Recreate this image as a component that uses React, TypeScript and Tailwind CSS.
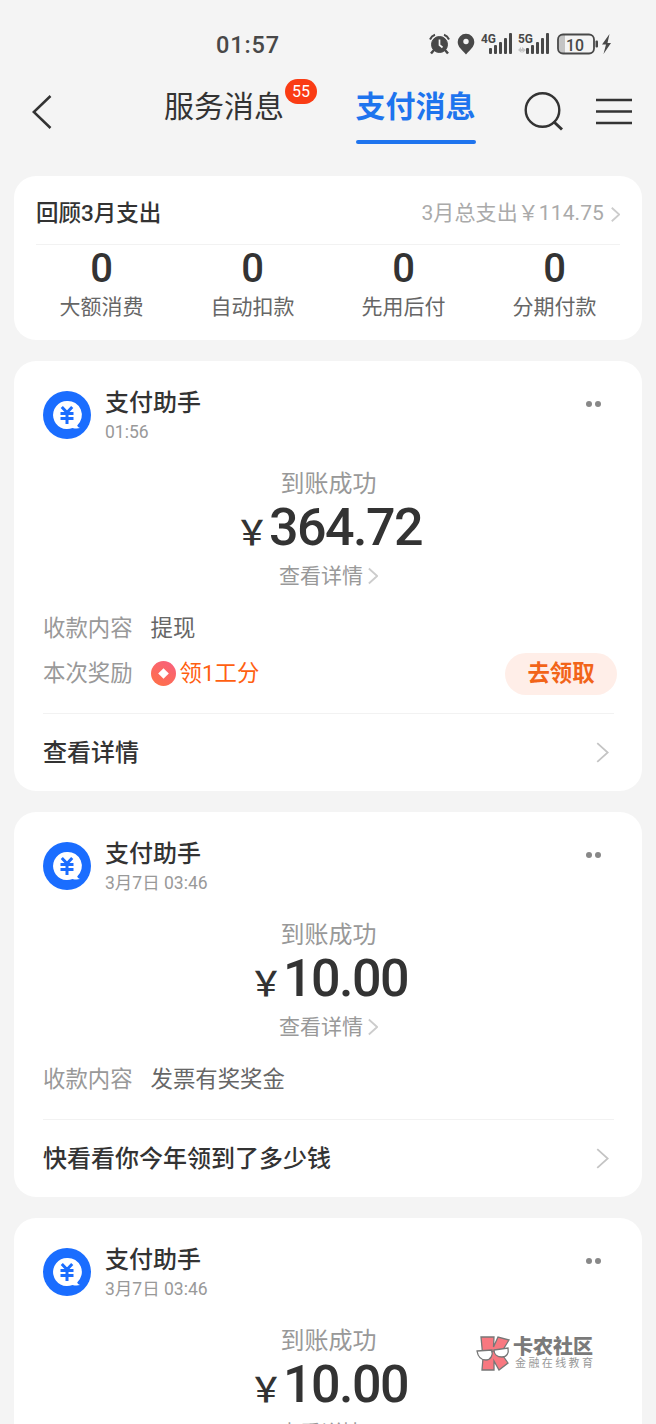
import type { ReactNode } from "react";

type Message = {
  time: string;
  amount: string;
  content: string;
  reward?: string;
  footer: string;
};

const stats = ["大额消费", "自动扣款", "先用后付", "分期付款"];

const messages: Message[] = [
  { time: "01:56", amount: "364.72", content: "提现", reward: "领1工分", footer: "查看详情" },
  { time: "3月7日 03:46", amount: "10.00", content: "发票有奖奖金", footer: "快看看你今年领到了多少钱" },
  { time: "3月7日 03:46", amount: "10.00", content: "发票有奖奖金", footer: "快看看你今年领到了多少钱" },
];

function Chevron({ className }: { className: string }) {
  return (
    <svg viewBox="0 0 12 20" fill="none" stroke="currentColor" className={className}>
      <path d="M1 1l10 9-10 9" strokeWidth="1.8" vectorEffect="non-scaling-stroke" />
    </svg>
  );
}

function Signal({ label, data }: { label: string; data?: boolean }) {
  return (
    <svg width="32" height="24" viewBox="0 0 32 24" fill="#484848">
      <text x="0" y="11" fontSize="12" fontWeight="700" textLength="15" lengthAdjust="spacingAndGlyphs">
        {label}
      </text>
      {data && <path d="M0 18l3-3v2h1v-2l4 3-3.500 3v-2h-1v2z" fill="#c4c4c4" />}
      <rect x="8" y="16" width="3" height="6" rx="1" />
      <rect x="13" y="13" width="3" height="9" rx="1" />
      <rect x="18" y="10" width="3" height="12" rx="1" />
      <rect x="23" y="6" width="3" height="16" rx="1" />
      <rect x="28" y="1" width="3" height="21" rx="1" />
    </svg>
  );
}

function StatusBar() {
  return (
    <div className="flex h-[76px] items-start pt-[31px] text-[#484848]">
      <span className="ml-[216px] w-[213px] text-[23.500px] leading-[28px] font-medium tracking-[0.9px]">01:57</span>
      <div className="flex items-center pt-[1px]">
        <svg width="21" height="22" viewBox="0 0 21 22" fill="none" stroke="#484848">
          <circle cx="10.500" cy="11.500" r="8" fill="#484848" />
          <path d="M1 6.500Q2.500 3 6 1.800M20 6.500Q18.500 3 15 1.800" strokeWidth="2" />
          <path d="M5 17l-3 3.500M16 17l3 3.500" strokeWidth="2.500" />
          <path d="M10.500 6.500v5.500l3 2.500" stroke="#f4f4f4" strokeWidth="1.700" />
        </svg>
        <svg width="18" height="22" viewBox="0 0 18 22" className="ml-[7px]">
          <path
            d="M9 .8a8.300 8.300 0 0 0-8.300 8.300C.7 14 5 17 9 21.500c4-4.500 8.300-7.500 8.300-12.400A8.300 8.300 0 0 0 9 .8z"
            fill="#484848"
          />
          <circle cx="9" cy="8.500" r="2.700" fill="#f4f4f4" />
        </svg>
        <div className="ml-[6px] flex gap-[5px]">
          <Signal label="4G" />
          <Signal label="5G" data />
        </div>
        <svg width="55" height="22" viewBox="0 0 55 22" className="ml-[7px]">
          <path d="M8 2v18H6a4 4 0 0 1-4-4V6a4 4 0 0 1 4-4z" fill="#c4c4c4" />
          <rect x="1" y="1.500" width="36" height="19" rx="5" fill="none" stroke="#484848" strokeWidth="1.800" />
          <text x="9" y="17.500" fontSize="17" fontWeight="500" fill="#484848" textLength="18" lengthAdjust="spacingAndGlyphs">
            10
          </text>
          <rect x="38.500" y="7.500" width="2.500" height="7" rx="1" fill="#484848" />
          <path d="M52.500 1L45 11.500h4L46.500 21 54 10h-3.500z" fill="#484848" />
        </svg>
      </div>
    </div>
  );
}

function NavBar() {
  return (
    <div className="flex h-[100px] items-start text-[#333]">
      <svg width="20" height="34" viewBox="0 0 20 34" fill="none" stroke="#333" strokeWidth="2.500" className="mt-[19px] ml-[32px]">
        <path d="M18.500 1L1.800 17l16.700 16" />
      </svg>
      <div className="relative ml-[112px] w-[121px] pt-[11px] text-[30px] leading-[40px]">
        服务消息
        <span className="absolute top-[3px] left-[121px] flex h-[25px] w-[32px] items-center justify-center rounded-full bg-[#fa3c14] text-[16px] text-white">
          55
        </span>
      </div>
      <div className="ml-[70px] flex w-[121px] flex-col items-center pt-[11px] text-[30px] leading-[40px] font-bold text-[#1e74ee]">
        支付消息
        <span className="mt-[13px] h-[4px] w-[120px] rounded-full bg-[#1e74ee]" />
      </div>
      <svg width="40" height="40" viewBox="0 0 40 40" fill="none" stroke="#333" strokeWidth="2.400" className="mt-[16px] ml-[48px]">
        <circle cx="18.500" cy="18" r="16.800" />
        <path d="M29.500 29.500l8.500 8" strokeWidth="3" />
      </svg>
      <svg width="36" height="28" viewBox="0 0 36 28" stroke="#333" strokeWidth="2.400" className="mt-[21px] ml-[32px]">
        <path d="M0 3h36M0 14.500h36M0 26h36" />
      </svg>
    </div>
  );
}

function Card({ children, className = "" }: { children: ReactNode; className?: string }) {
  return <section className={`mx-[14px] shrink-0 rounded-[22px] bg-white ${className}`}>{children}</section>;
}

function Summary() {
  return (
    <Card className="h-[164px] px-[22px]">
      <div className="flex h-[69px] items-center border-b border-[#f2f2f2] pt-[8px]">
        <h2 className="text-[22.500px] font-medium text-[#333]">回顾3月支出</h2>
        <span className="ml-auto text-[21px] tracking-[0.1px] text-[#aaa]">3月总支出￥114.75</span>
        <Chevron className="ml-[7px] h-[17px] w-[9px] text-[#ccc]" />
      </div>
      <div className="-mx-[10px] grid grid-cols-4">
        {stats.map((label) => (
          <div key={label} className="flex flex-col items-center">
            <span className="mt-[3px] text-[40px] leading-[42px] font-medium text-[#333]">0</span>
            <span className="mt-[2px] text-[21px] leading-[30px] text-[#666]">{label}</span>
          </div>
        ))}
      </div>
    </Card>
  );
}

function Avatar() {
  return (
    <svg width="48" height="48" viewBox="0 0 48 48" fill="none">
      <circle cx="24" cy="24" r="24" fill="#1a6dff" />
      <path d="M24 10a14 14 0 1 0 5.500 26.900c2.500.7 5 .8 7.500.1-1.500-.7-2.500-1.500-2.800-2.600A14 14 0 0 0 24 10z" fill="#fff" />
      <path d="M18.800 16l5.200 5.500 5.200-5.500M17.500 22.500h13M17.500 27.500h13M24 22v11" stroke="#1a6dff" strokeWidth="3" />
    </svg>
  );
}

function RewardIcon() {
  return (
    <svg width="25" height="25" viewBox="0 0 25 25">
      <defs>
        <linearGradient id="reward" x1="0.8" y1="0" x2="0.200" y2="1">
          <stop offset="0" stopColor="#f8607c" />
          <stop offset="1" stopColor="#ff7048" />
        </linearGradient>
      </defs>
      <circle cx="12.500" cy="12.500" r="12.500" fill="url(#reward)" />
      <path d="M12.500 7.200l5.300 5.300-5.300 5.300-5.300-5.300z" fill="#fff" />
    </svg>
  );
}

function MessageCard({ message }: { message: Message }) {
  return (
    <Card className="pr-[28px] pl-[29px]">
      <div className="flex pt-[26px]">
        <div className="mt-[4px]">
          <Avatar />
        </div>
        <div className="ml-[14px] flex-1">
          <h3 className="text-[24px] leading-[32px] font-medium text-[#333]">支付助手</h3>
          <p className="mt-[1px] text-[17.500px] leading-[24px] text-[#999]">{message.time}</p>
        </div>
        <div className="mt-[14px] mr-[13px] flex gap-[3px]">
          <span className="size-[6px] rounded-full bg-[#888]" />
          <span className="size-[6px] rounded-full bg-[#888]" />
        </div>
      </div>
      <div className="mt-[25px] flex flex-col items-center">
        <p className="text-[24px] leading-[30px] text-[#999]">到账成功</p>
        <p className="flex items-baseline text-[52px] leading-[58px] font-medium tracking-[-1.500px] text-[#333]">
          <span className="text-[34px] tracking-normal">￥</span>
          {message.amount}
        </p>
        <p className="mt-[-1px] flex items-center text-[21px] leading-[30px] text-[#999]">
          查看详情
          <Chevron className="ml-[5px] h-[18px] w-[10px] text-[#ccc]" />
        </p>
      </div>
      <div className="pt-[15px] text-[22.400px] text-[#999]">
        <div className="flex h-[45px] items-center gap-[18px]">
          <span>收款内容</span>
          <span className="text-[#666]">{message.content}</span>
        </div>
        {message.reward && (
          <div className="mb-[10px] flex h-[45px] items-center">
            <span>本次奖励</span>
            <span className="ml-[18px] flex items-center gap-[4px] text-[#ff6010]">
              <RewardIcon />
              {message.reward}
            </span>
            <button className="mr-[-3px] ml-auto h-[42px] w-[112px] rounded-full bg-[#ffeee8] text-[22.400px] font-bold text-[#f26419]">
              去领取
            </button>
          </div>
        )}
      </div>
      <div className="mt-[17px] flex h-[78px] items-center border-t border-[#f2f2f2]">
        <span className="text-[24px] font-medium text-[#333]">{message.footer}</span>
        <Chevron className="mr-[5px] ml-auto h-[21px] w-[13px] text-[#c4c4c4]" />
      </div>
    </Card>
  );
}

function Watermark() {
  return (
    <div className="absolute top-[1336px] left-[476px] flex">
      <svg width="34" height="36" viewBox="0 0 34 36" stroke="#777" strokeWidth="1.300">
        <path d="M5 1h13l-.5 10L22 1l11 3-8 13 7 10-9 7-5-9v9H6l1-12z" fill="#f87880" />
        <path d="M1 15l15-1c1 5-1 10-6 10S2 21 1 15zM18 14l14-2c1 5-1 9-6 9s-8-3-8-7z" fill="#fff" />
        <path d="M15 16l3-1" />
      </svg>
      <div className="ml-[3px]">
        <p className="text-[20px] leading-[22px] font-black text-[#7a7a7a]">卡农社区</p>
        <p className="ml-[2px] text-[11px] leading-[12px] tracking-[2.400px] text-[#999]">金融在线教育</p>
      </div>
    </div>
  );
}

export default function App() {
  return (
    <main className="relative h-[1424px] w-[656px] overflow-hidden bg-[#f4f4f4] font-[Roboto,'Noto_Sans_CJK_SC',sans-serif]">
      <StatusBar />
      <NavBar />
      <div className="flex flex-col gap-[21px]">
        <Summary />
        {messages.map((message, i) => (
          <MessageCard key={i} message={message} />
        ))}
      </div>
      <Watermark />
    </main>
  );
}
